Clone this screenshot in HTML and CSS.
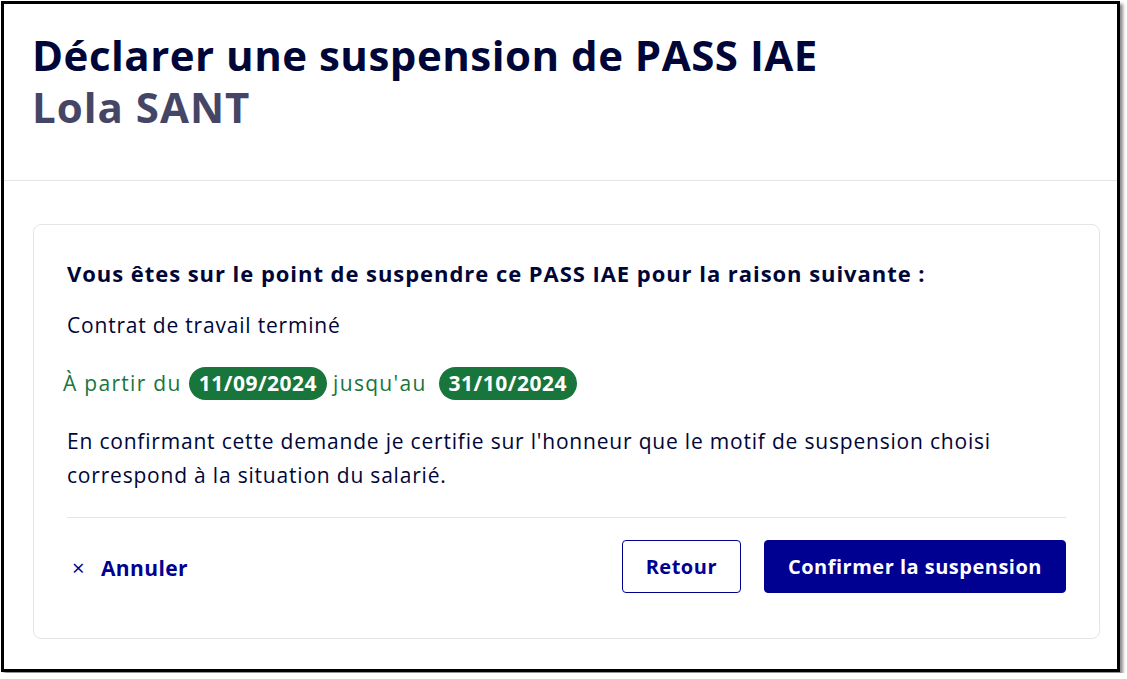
FILE: index.html
```html
<!DOCTYPE html>
<html lang="fr">
<head>
    <meta charset="UTF-8">
    <meta name="viewport" content="width=device-width, initial-scale=1.0">
    <title>Déclarer une suspension de PASS IAE</title>
    <link rel="stylesheet" href="styles.css">
</head>
<body>
    <div class="frame">
        <div class="modal-header">
            <h1>Déclarer une suspension de PASS IAE<br><span class="subtitle">Lola SANT</span></h1>
        </div>
        <div class="modal-body">
            <div class="card">
                <p class="lead">Vous êtes sur le point de suspendre ce PASS IAE pour la raison suivante :</p>
                <p>Contrat de travail terminé</p>
                <p class="period">À partir du<span class="badge">11/09/2024</span>jusqu'au<span class="badge badge-end">31/10/2024</span></p>
                <p class="certify">En confirmant cette demande je certifie sur l'honneur que le motif de suspension choisi correspond à la situation du salarié.</p>
                <div class="actions">
                    <a href="#" class="cancel"><span class="cross">×</span>Annuler</a>
                    <div class="buttons">
                        <button class="btn btn-secondary">Retour</button>
                        <button class="btn btn-primary">Confirmer la suspension</button>
                    </div>
                </div>
            </div>
        </div>
    </div>
</body>
</html>
```

FILE: styles.css
```css
body {
    margin: 0;
    padding: 0;
    background-color: #fff;
    font-family: "Open Sans", "Noto Sans", sans-serif;
    color: #000638;
}

.frame {
    margin: 1px;
    width: 1113px;
    height: 665px;
    border: 3px solid #000;
    box-shadow: 3px 3px 3px rgba(0, 0, 0, 0.45);
    background-color: #fff;
    overflow: hidden;
}

.modal-header {
    padding: 25px 28px 0 28px;
    height: 151px;
    border-bottom: 1px solid #e5e5e5;
}

h1 {
    margin: 0;
    font-size: 42px;
    line-height: 52px;
    font-weight: 700;
    color: #000638;
    letter-spacing: 0.5px;
}

.subtitle {
    color: #454566;
    letter-spacing: 1px;
}

.modal-body {
    padding: 43px 17px 0 29px;
}

.card {
    border: 1px solid #e5e5e5;
    border-radius: 8px;
    padding: 33px 33px 45px 33px;
}

.card p {
    margin: 0 0 24px 0;
    font-size: 21px;
    line-height: 34px;
    letter-spacing: 0.8px;
}

.card .lead {
    font-size: 22px;
    line-height: 30px;
    font-weight: 700;
    margin-bottom: 20px;
    letter-spacing: 0.95px;
}

.card .certify {
    margin-bottom: 25px;
}

.card .period {
    color: #18753c;
    margin-left: -4px;
    letter-spacing: 1.3px;
}

.badge {
    display: inline-block;
    background-color: #18753c;
    color: #fff;
    font-weight: 700;
    border-radius: 17px;
    padding: 0 10px;
    line-height: 33px;
    margin: 0 6px 0 7px;
    letter-spacing: 0.5px;
}

.badge-end {
    margin-left: 12px;
}

.actions {
    display: flex;
    justify-content: space-between;
    align-items: center;
    border-top: 1px solid #e5e5e5;
    padding-top: 22px;
}

.cancel {
    color: #000091;
    font-weight: 700;
    font-size: 21px;
    letter-spacing: 0.4px;
    text-decoration: none;
    padding-left: 5px;
}

.cross {
    font-weight: 400;
    margin-right: 16px;
    font-size: 22px;
}

.buttons {
    display: flex;
    gap: 23px;
}

.btn {
    font-family: inherit;
    font-size: 20px;
    font-weight: 700;
    letter-spacing: 0.5px;
    height: 53px;
    padding: 0 23px;
    border-radius: 4px;
    cursor: pointer;
}

.btn-secondary {
    background-color: #fff;
    color: #000091;
    border: 1px solid #000091;
}

.btn-primary {
    background-color: #000091;
    color: #fff;
    border: 1px solid #000091;
}
```
